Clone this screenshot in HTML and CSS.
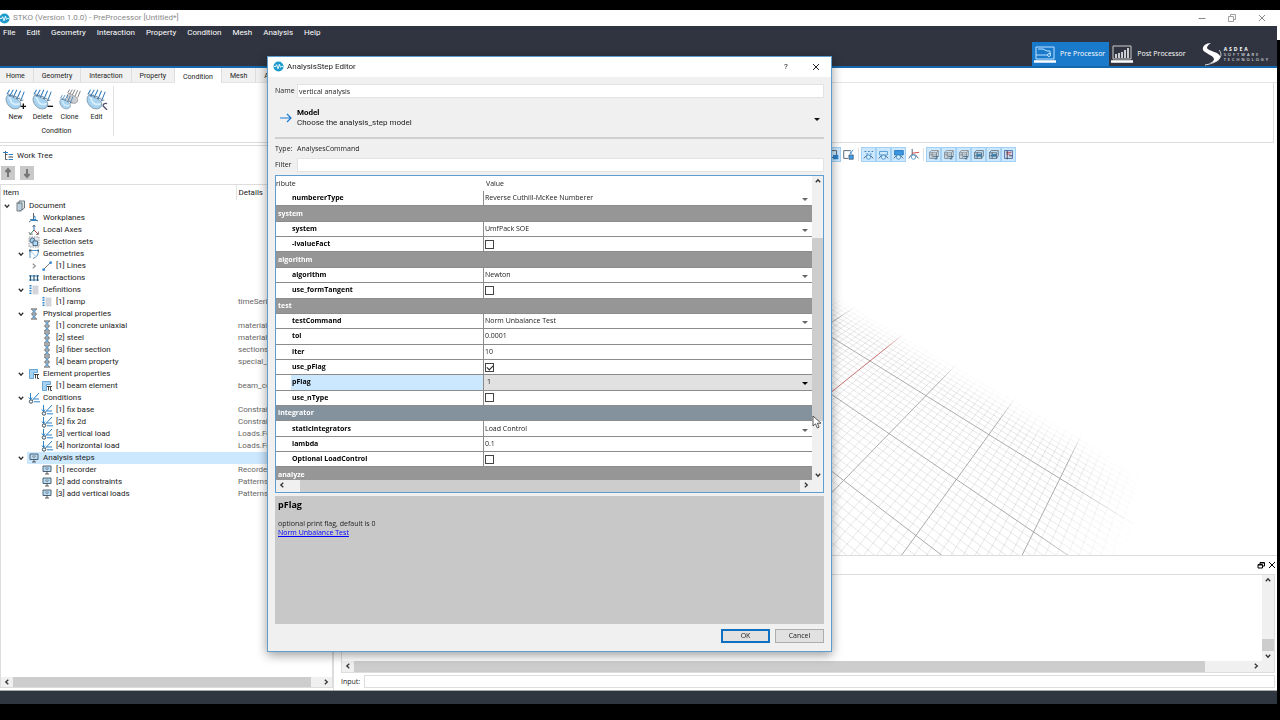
FILE: index.html
```html
<!DOCTYPE html>
<html lang="en">
  <head>
    <meta charset="UTF-8" />
    <meta name="viewport" content="width=device-width, initial-scale=1.0" />
    <title>STKO (Version 1.0.0) - PreProcessor [Untitled*]</title>
    <link rel="stylesheet" href="styles.css">
  </head>
  <body>
    <!-- Icon sprite -->
    <svg class="sprite" aria-hidden="true">
      <symbol id="i-app" viewBox="0 0 12 12"><circle cx="6" cy="6" r="5.5" fill="#1d9ccd"/><path d="M1 6h2l1-2 1.500 4.500 1.500-5 1.200 3.500 1-1h1.800" fill="none" stroke="#fff"/></symbol>
      <symbol id="i-min" viewBox="0 0 10 10"><path d="M1.500 5.500h7" stroke="#888" fill="none"/></symbol>
      <symbol id="i-max" viewBox="0 0 10 10"><path d="M1.500 3.500h5v5h-5zM3.500 3V1.500h5v5H7" stroke="#888" stroke-width=".8" fill="none"/></symbol>
      <symbol id="i-restore" viewBox="0 0 10 10"><path d="M2 4.500h4.500v3.500H2zM4 4V2.500h4.500v3.500H7M2 5h4M4 3h4" stroke="#000" fill="none"/></symbol>
      <symbol id="i-close" viewBox="0 0 10 10"><path d="M2 2l6 6M8 2l-6 6" stroke="currentColor" fill="none"/></symbol>
      <symbol id="i-left" viewBox="0 0 10 10"><path d="M6.300 2.800L3.800 5l2.500 2.200" stroke="#333" stroke-width="1.300" fill="none"/></symbol>
      <symbol id="i-right" viewBox="0 0 10 10"><path d="M3.800 2.800L6.300 5 3.800 7.200" stroke="#333" stroke-width="1.300" fill="none"/></symbol>
      <symbol id="i-up" viewBox="0 0 10 10"><path d="M2.800 6.300L5 3.800l2.200 2.500" stroke="#333" stroke-width="1.300" fill="none"/></symbol>
      <symbol id="i-down" viewBox="0 0 10 10"><path d="M2.800 3.800L5 6.300l2.200-2.500" stroke="#333" stroke-width="1.300" fill="none"/></symbol>
      <symbol id="i-load" viewBox="0 0 22 24"><path d="M2 9c2-3 5 0 7 1 4 2 9 4 8 9-1 4-7 5-11 2S0 13 2 9z" fill="#a9d4f1" stroke="#7e93a3"/><path d="M4 10c3 1 1 5 5 7s6 0 7 0" stroke="#d8eefb" stroke-width="2" fill="none"/><path d="M9 2L5 9M13 2L9 10M17 3l-4 9M21 4l-4 10M5 2L2 7" stroke="#2e78b8" fill="none" stroke-width="1.100"/><path d="M4 6l1 3 3-1M8 7l1 3 3-1M12 9l1 3 3-1M16 11l1 3 3-1" stroke="#4a6f8f" fill="none" stroke-width=".8"/></symbol>
      <symbol id="i-loadgrey" viewBox="0 0 22 24"><path d="M2 9c2-3 5 0 7 1 4 2 9 4 8 9-1 4-7 5-11 2S0 13 2 9z" fill="#c9ccd0" stroke="#8c8c8c"/><path d="M9 2L5 9M13 2L9 10M17 3l-4 9M21 4l-4 10M5 2L2 7" stroke="#555" fill="none" stroke-width="1.100"/></symbol>
      <symbol id="i-tree" viewBox="0 0 12 10"><path d="M2.500 0v8.500h2M2.500 3.500h2" fill="none" stroke="#333" stroke-width=".8"/><path d="M0 1.500h5M5.500 3.500H10M5.500 8.500H10" stroke="#2e84c6"/><path d="M5.500 6H10" stroke="#444"/></symbol>
      <symbol id="t-doc" viewBox="0 0 12 12"><path d="M5 1h5.500v7L8 10H5zM3 2.500v8.500h4.500M3 3h5v7" fill="#dbe4ea" stroke="#4d5a63" stroke-width=".8"/><path d="M4 4h3v6H4z" fill="#b9cfdf"/></symbol>
      <symbol id="t-plane" viewBox="0 0 12 12"><path d="M5.500 1v6L1 10M5.500 7L10 9" stroke="#444" stroke-width=".8" fill="none"/><path d="M1.500 7h6l2.500 2H4zM5.500 3l2 1.500V8" fill="#2e84c6"/></symbol>
      <symbol id="t-axes" viewBox="0 0 12 12"><path d="M6 1v5" stroke="#2675b9"/><path d="M6 6l-4 4.500" stroke="#33855d"/><path d="M6 6l4 4" stroke="#b43b3b"/><path d="M4.500 3L6 1l1.500 2M1 8l1 2.500 3-.5M10.500 7.500v3H8" fill="none" stroke="#555" stroke-width=".7"/></symbol>
      <symbol id="t-set" viewBox="0 0 12 12"><path d="M1 1h10v10H1z" fill="#e5ebf0" stroke="#777" stroke-dasharray="1.500 1" stroke-width=".7"/><circle cx="4.500" cy="4.500" r="2.500" fill="#a7ccea" stroke="#30536f" stroke-width=".8"/><path d="M5 5h4.500v4.500H5z" fill="#b6daf5" stroke="#30536f" stroke-width=".8"/></symbol>
      <symbol id="t-geom" viewBox="0 0 12 12"><path d="M2 1.500V10M2 2.500h8.500c0 4-2 7-5.500 8" fill="none" stroke="#3b88c2" stroke-width=".9"/><path d="M1 1.500h2.500v2H1zM9.500 1.500h1.500v2H9.500z" fill="#4a6578"/><path d="M3.500 4l4 4" stroke="#9bc8e8"/></symbol>
      <symbol id="t-line" viewBox="0 0 12 12"><path d="M2.500 9.500l7-7" stroke="#555" stroke-width=".8"/><path d="M1.500 8.500h2.300v2.300H1.500zM8.500 1.500h2.300v2.300H8.500z" fill="#1c7cd1"/></symbol>
      <symbol id="t-inter" viewBox="0 0 12 12"><path d="M1 4h10M1 8h10" stroke="#2e84c6" stroke-width="1.200"/><path d="M2.500 3v6M6 3v6M9.500 3v6" stroke="#32556f" stroke-width="1.200"/></symbol>
      <symbol id="t-def" viewBox="0 0 12 12"><path d="M4.500 1.500h6v9h-6z" fill="#d2d6da"/><path d="M2.500 1v10" stroke="#2e84c6" stroke-width="2" stroke-dasharray="1.500 1"/></symbol>
      <symbol id="t-phys" viewBox="0 0 12 12"><path d="M3 1h6M3 11h6M4 1.500l4 4M8 1.500l-4 4M4 6.500l4 4M8 6.500l-4 4M3.500 6h5" fill="none" stroke="#33404a" stroke-width=".9"/><circle cx="6" cy="3.500" r="1.200" fill="#5ba4db"/><circle cx="6" cy="8.500" r="1.200" fill="#5ba4db"/></symbol>
      <symbol id="t-elem" viewBox="0 0 12 12"><path d="M1.500 1.500h8v3h-4v6h-4z" fill="#a8d4f4" stroke="#4b96ce" stroke-width=".8"/><path d="M6 6.500h5M7.500 6.500v4M9.500 6.500v4h1.500" fill="none" stroke="#333" stroke-width=".9"/></symbol>
      <symbol id="t-cond" viewBox="0 0 12 12"><path d="M2.500 1v6M.8 5.500l1.700 2 1.700-2M11 1L4 8.500M5.500 7h5.500M6 9.800h6" fill="none" stroke="#2e84c6"/><circle cx="3" cy="9.500" r="1.700" fill="none" stroke="#3b4f5d"/></symbol>
      <symbol id="t-step" viewBox="0 0 12 12"><path d="M2 2h8v5.500H2z" fill="#b8dcf5" stroke="#3f5564" stroke-width=".9"/><path d="M4 10h4M6 7.500V10" stroke="#333" stroke-width=".8"/><path d="M4.500 4h3L6 6z" fill="#fff" stroke="#456" stroke-width=".6"/></symbol>
      <symbol id="v-select" viewBox="0 0 15 15"><path d="M3 3h8v8H3z" fill="none" stroke="#456"/><path d="M7 8h6v5H7z" fill="#2b80c8"/></symbol>
      <symbol id="v-selbox" viewBox="0 0 15 15"><path d="M10 3H2v9h5" fill="none" stroke="#456"/><path d="M8 8h5v5H8z" fill="#4a9bdb" stroke="#246" stroke-width=".7"/><path d="M9 7l4-5M9.500 4l1.500 2.500" stroke="#2b80c8" fill="none"/></symbol>
      <symbol id="v-points" viewBox="0 0 15 15"><path d="M3 4h10M5 7h6" stroke="#2b6ca8" stroke-dasharray="2 2"/><path d="M2 12l3-3h5l3 3" stroke="#456" fill="none"/><circle cx="7.500" cy="10.500" r="2.500" fill="#d3eafb" stroke="#4793cf"/></symbol>
      <symbol id="v-wire" viewBox="0 0 15 15"><path d="M3 4h9v4H3z" fill="#d3eafb" stroke="#4793cf"/><path d="M2 12l3-3h5l3 3" stroke="#456" fill="none"/><circle cx="7.500" cy="10.500" r="2.500" fill="#d3eafb" stroke="#4793cf"/></symbol>
      <symbol id="v-solid" viewBox="0 0 15 15"><path d="M3 3h10v5H3z" fill="#3b96e3" stroke="#2371b3"/><path d="M2 12l3-3h5l3 3" stroke="#456" fill="none"/><circle cx="7.500" cy="10.500" r="2.500" fill="#d3eafb" stroke="#4793cf"/></symbol>
      <symbol id="v-axes" viewBox="0 0 15 15"><path d="M6 1v7M2 12l3-4h5l3 4" stroke="#456" fill="none"/><path d="M6 6l8-1" stroke="#c33"/><circle cx="7.500" cy="10.500" r="2.500" fill="#fff" stroke="#4793cf"/></symbol>
      <symbol id="v-cube" viewBox="0 0 15 15"><path d="M3 5l2-2h8v6l-2 3H3zM3 5.500h8V12M11 5.500l2-2M3 8h8M6 5v7" fill="#dce6ee" stroke="#65717a" stroke-width=".8"/><path d="M7 10h6M9 12.500h3" stroke="#2b5c80"/></symbol>
      <symbol id="v-cubeblue" viewBox="0 0 15 15"><path d="M3 5l2-2h8v6l-2 3H3zM3 5.500h8V12M3 9h8M6 5v7" fill="#cbe4f7" stroke="#3b4c59" stroke-width=".8"/><path d="M5 7h6v3H5z" fill="#3d7eab"/></symbol>
      <symbol id="v-flag" viewBox="0 0 15 15"><path d="M3 3h9v9H3z" fill="#dbe7f5" stroke="#3b5c9b"/><path d="M5 5h6M5 7h5" stroke="#b45"/><path d="M6 3v10M8 9h4" stroke="#334"/></symbol>
    </svg>

    <div class="app">
      <header class="titlebar">
        <svg class="app-icon"><use href="#i-app"/></svg>
        <span class="titlebar-text">STKO (Version 1.0.0) - PreProcessor [Untitled*]</span>
        <button class="win-btn" aria-label="Minimize"><svg class="glyph"><use href="#i-min"/></svg></button>
        <button class="win-btn" aria-label="Restore"><svg class="glyph"><use href="#i-max"/></svg></button>
        <button class="win-btn" aria-label="Close"><svg class="glyph"><use href="#i-close"/></svg></button>
      </header>

      <div class="topband">
        <nav class="menubar">
          <a href="#">File</a><a href="#">Edit</a><a href="#">Geometry</a><a href="#">Interaction</a><a href="#">Property</a><a href="#">Condition</a><a href="#">Mesh</a><a href="#">Analysis</a><a href="#">Help</a>
        </nav>
        <div class="modes">
          <button class="mode active">
            <svg viewBox="0 0 22 20"><path d="M2 3h18v12H2zM2 11h13l2-2M4 5h5l4 2h3v4" fill="none" stroke="#bfe3ff"/><path d="M0 17.500h22" stroke="#fff" stroke-width="2.500"/><circle cx="15" cy="11" r="1.500" fill="#1979ca" stroke="#bfe3ff"/></svg>
            Pre Processor
          </button>
          <button class="mode">
            <svg viewBox="0 0 22 20"><path d="M2 2h18v13H2z" fill="none" stroke="#ccc"/><path d="M5 14v-4M8 14V9M11 14V8M14 14V6M17 14V4" stroke="#fff" stroke-width="1.500"/><path d="M0 17.500h22" stroke="#fff" stroke-width="2.500"/></svg>
            Post Processor
          </button>
          <div class="brand">
            <svg viewBox="0 0 20 24"><path d="M9 1C4 1 0 4 1 8c1 3 10 5 11 9 0 2-2 3-4 4 6 0 11-3 10-7S6 9 5 6c0-2 2-4 4-5z" fill="#fff"/><path d="M17 8c4 4 3 12-14 15" fill="none" stroke="#ddd"/></svg>
            <div class="brand-text"><b>ASDEA</b><span>SOFTWARE</span><span>TECHNOLOGY</span></div>
          </div>
        </div>
      </div>

      <div class="tabs">
        <button>Home</button><button>Geometry</button><button>Interaction</button><button>Property</button><button class="current">Condition</button><button>Mesh</button><button>Analysis</button>
      </div>
      <section class="ribbon">
        <div class="ribbon-group">
          <div class="ribbon-tools">
            <button><svg viewBox="0 0 24 24"><use href="#i-load" width="22" height="24"/><path d="M17 20h6M20 17v6" stroke="#111" stroke-width="1.500"/></svg>New</button>
            <button><svg viewBox="0 0 24 24"><use href="#i-load" width="22" height="24"/><path d="M17 20h6" stroke="#111" stroke-width="1.500"/></svg>Delete</button>
            <button><svg viewBox="0 0 24 24"><use href="#i-loadgrey" x="8" width="16" height="18"/><use href="#i-load" x="0" y="6" width="16" height="18"/></svg>Clone</button>
            <button><svg viewBox="0 0 24 24"><use href="#i-load" width="22" height="24"/><path d="M23 17c-3-1-5 1-4 3l4 4" stroke="#557" fill="none" stroke-width="1.500"/></svg>Edit</button>
          </div>
          <div class="ribbon-label">Condition</div>
        </div>
      </section>

      <main class="workspace">
        <aside class="dock">
          <h2><svg><use href="#i-tree"/></svg>Work Tree</h2>
          <div class="dock-tools">
            <button aria-label="Move up"><svg viewBox="0 0 14 14"><path d="M7 11V4M4.500 6L7 3l2.500 3" fill="none" stroke="#777" stroke-width="2"/></svg></button>
            <button aria-label="Move down"><svg viewBox="0 0 14 14"><path d="M7 3v7M4.500 8L7 11l2.500-3" fill="none" stroke="#777" stroke-width="2"/></svg></button>
          </div>
          <div class="tree-panel">
            <table class="tree">
              <thead><tr><th>Item</th><th>Details</th></tr></thead>
              <tbody>
                <tr><td><div class="node l0"><svg><use href="#i-down"/></svg><svg><use href="#t-doc"/></svg>Document</div></td><td></td></tr>
                <tr><td><div class="node l1"><i></i><svg><use href="#t-plane"/></svg>Workplanes</div></td><td></td></tr>
                <tr><td><div class="node l1"><i></i><svg><use href="#t-axes"/></svg>Local Axes</div></td><td></td></tr>
                <tr><td><div class="node l1"><i></i><svg><use href="#t-set"/></svg>Selection sets</div></td><td></td></tr>
                <tr><td><div class="node l1"><svg><use href="#i-down"/></svg><svg><use href="#t-geom"/></svg>Geometries</div></td><td></td></tr>
                <tr><td><div class="node l2"><svg class="dim"><use href="#i-right"/></svg><svg><use href="#t-line"/></svg>[1] Lines</div></td><td></td></tr>
                <tr><td><div class="node l1"><i></i><svg><use href="#t-inter"/></svg>Interactions</div></td><td></td></tr>
                <tr><td><div class="node l1"><svg><use href="#i-down"/></svg><svg><use href="#t-def"/></svg>Definitions</div></td><td></td></tr>
                <tr><td><div class="node l2"><i></i><svg><use href="#t-def"/></svg>[1] ramp</div></td><td>timeSeries</td></tr>
                <tr><td><div class="node l1"><svg><use href="#i-down"/></svg><svg><use href="#t-phys"/></svg>Physical properties</div></td><td></td></tr>
                <tr><td><div class="node l2"><i></i><svg><use href="#t-phys"/></svg>[1] concrete uniaxial</div></td><td>materials</td></tr>
                <tr><td><div class="node l2"><i></i><svg><use href="#t-phys"/></svg>[2] steel</div></td><td>materials</td></tr>
                <tr><td><div class="node l2"><i></i><svg><use href="#t-phys"/></svg>[3] fiber section</div></td><td>sections</td></tr>
                <tr><td><div class="node l2"><i></i><svg><use href="#t-phys"/></svg>[4] beam property</div></td><td>special_purpose</td></tr>
                <tr><td><div class="node l1"><svg><use href="#i-down"/></svg><svg><use href="#t-elem"/></svg>Element properties</div></td><td></td></tr>
                <tr><td><div class="node l2"><i></i><svg><use href="#t-elem"/></svg>[1] beam element</div></td><td>beam_column</td></tr>
                <tr><td><div class="node l1"><svg><use href="#i-down"/></svg><svg><use href="#t-cond"/></svg>Conditions</div></td><td></td></tr>
                <tr><td><div class="node l2"><i></i><svg><use href="#t-cond"/></svg>[1] fix base</div></td><td>Constraints</td></tr>
                <tr><td><div class="node l2"><i></i><svg><use href="#t-cond"/></svg>[2] fix 2d</div></td><td>Constraints</td></tr>
                <tr><td><div class="node l2"><i></i><svg><use href="#t-cond"/></svg>[3] vertical load</div></td><td>Loads.Force</td></tr>
                <tr><td><div class="node l2"><i></i><svg><use href="#t-cond"/></svg>[4] horizontal load</div></td><td>Loads.Force</td></tr>
                <tr class="selected"><td><div class="node l1"><svg><use href="#i-down"/></svg><svg><use href="#t-step"/></svg>Analysis steps</div></td><td></td></tr>
                <tr><td><div class="node l2"><i></i><svg><use href="#t-step"/></svg>[1] recorder</div></td><td>Recorders</td></tr>
                <tr><td><div class="node l2"><i></i><svg><use href="#t-step"/></svg>[2] add constraints</div></td><td>Patterns</td></tr>
                <tr><td><div class="node l2"><i></i><svg><use href="#t-step"/></svg>[3] add vertical loads</div></td><td>Patterns</td></tr>
              </tbody>
            </table>
            <div class="hbar tree-bar"><svg><use href="#i-left"/></svg><div class="track"><div class="thumb"></div></div><svg><use href="#i-right"/></svg></div>
          </div>
        </aside>

        <section class="view">
          <div class="viewbar">
            <button class="on" aria-label="Select"><svg><use href="#v-select"/></svg></button>
            <button aria-label="Select box"><svg><use href="#v-selbox"/></svg></button>
            <span class="sep"></span>
            <button class="on" aria-label="Points"><svg><use href="#v-points"/></svg></button>
            <button class="on" aria-label="Wireframe"><svg><use href="#v-wire"/></svg></button>
            <button class="on" aria-label="Solid"><svg><use href="#v-solid"/></svg></button>
            <button aria-label="Axes"><svg><use href="#v-axes"/></svg></button>
            <span class="sep"></span>
            <button class="on" aria-label="Top"><svg><use href="#v-cube"/></svg></button>
            <button class="on" aria-label="Bottom"><svg><use href="#v-cube"/></svg></button>
            <button class="on" aria-label="Front"><svg><use href="#v-cube"/></svg></button>
            <button class="on" aria-label="Back"><svg><use href="#v-cubeblue"/></svg></button>
            <button class="on" aria-label="Left"><svg><use href="#v-cubeblue"/></svg></button>
            <button class="on" aria-label="Labels"><svg><use href="#v-flag"/></svg></button>
          </div>
          <div class="scene"><canvas id="scene"></canvas></div>
          <div class="console-head">
            <button class="win-btn small" aria-label="Float"><svg class="glyph"><use href="#i-restore"/></svg></button>
            <button class="win-btn small" aria-label="Close console"><svg class="glyph"><use href="#i-close"/></svg></button>
          </div>
          <div class="console">
            <div class="console-text"></div>
            <div class="vbar console-vbar"><svg><use href="#i-up"/></svg><div class="track"><div class="thumb"></div></div><svg><use href="#i-down"/></svg></div>
            <div class="hbar console-hbar"><svg><use href="#i-left"/></svg><div class="track"><div class="thumb"></div></div><svg><use href="#i-right"/></svg></div>
          </div>
          <div class="console-input"><label for="cmd">Input:</label><input id="cmd" type="text" /></div>
        </section>
      </main>

      <footer class="statusbar"></footer>
    </div>

    <div class="dialog" role="dialog" aria-labelledby="dlg-title">
      <div class="dialog-title">
        <svg class="app-icon"><use href="#i-app"/></svg>
        <span id="dlg-title">AnalysisStep Editor</span>
        <button class="win-btn" aria-label="Help">?</button>
        <button class="win-btn" aria-label="Close dialog"><svg class="glyph"><use href="#i-close"/></svg></button>
      </div>
      <div class="dialog-body">
        <div class="field"><label for="name">Name</label><input id="name" type="text" value="vertical analysis" /></div>
        <button class="model">
          <svg viewBox="0 0 14 12"><path d="M1 6h11M8 2l4 4-4 4" fill="none" stroke="#1c7cd1" stroke-width="1.200"/></svg>
          <span><b>Model</b>Choose the analysis_step model</span>
        </button>
        <div class="field type"><span>Type:</span><span>AnalysesCommand</span></div>
        <div class="field"><label for="filter">Filter</label><input id="filter" type="text" /></div>

        <div class="props">
          <div class="props-view">
            <table>
              <thead><tr><th>ribute</th><th>Value</th></tr></thead>
              <tbody>
                <tr><th><label for="p1">numbererType</label></th><td class="combo"><select id="p1"><option>Reverse Cuthill-McKee Numberer</option></select></td></tr>
                <tr class="group"><th colspan="2">system</th></tr>
                <tr><th><label for="p2">system</label></th><td class="combo"><select id="p2"><option>UmfPack SOE</option></select></td></tr>
                <tr><th><label for="p3">-lvalueFact</label></th><td><input id="p3" type="checkbox" /></td></tr>
                <tr class="group"><th colspan="2">algorithm</th></tr>
                <tr><th><label for="p4">algorithm</label></th><td class="combo"><select id="p4"><option>Newton</option></select></td></tr>
                <tr><th><label for="p5">use_formTangent</label></th><td><input id="p5" type="checkbox" /></td></tr>
                <tr class="group"><th colspan="2">test</th></tr>
                <tr><th><label for="p6">testCommand</label></th><td class="combo"><select id="p6"><option>Norm Unbalance Test</option></select></td></tr>
                <tr><th><label for="p7">tol</label></th><td><input id="p7" type="text" value="0.0001" /></td></tr>
                <tr><th><label for="p8">iter</label></th><td><input id="p8" type="text" value="10" /></td></tr>
                <tr><th><label for="p9">use_pFlag</label></th><td><input id="p9" type="checkbox" checked /></td></tr>
                <tr class="editing"><th><label for="p10">pFlag</label></th><td class="combo"><select id="p10"><option>1</option></select></td></tr>
                <tr><th><label for="p11">use_nType</label></th><td><input id="p11" type="checkbox" /></td></tr>
                <tr class="group hover"><th colspan="2">integrator</th></tr>
                <tr><th><label for="p12">staticIntegrators</label></th><td class="combo"><select id="p12"><option>Load Control</option></select></td></tr>
                <tr><th><label for="p13">lambda</label></th><td><input id="p13" type="text" value="0.1" /></td></tr>
                <tr><th><label for="p14">Optional LoadControl</label></th><td><input id="p14" type="checkbox" /></td></tr>
                <tr class="group"><th colspan="2">analyze</th></tr>
              </tbody>
            </table>
          </div>
          <div class="vbar props-vbar"><svg><use href="#i-up"/></svg><div class="track"><div class="thumb"></div></div><svg><use href="#i-down"/></svg></div>
          <div class="hbar props-hbar"><svg><use href="#i-left"/></svg><div class="track"><div class="thumb"></div></div><svg><use href="#i-right"/></svg></div>
        </div>

        <div class="help">
          <h3>pFlag</h3>
          <p>optional print flag, default is 0</p>
          <a href="#">Norm Unbalance Test</a>
        </div>
        <div class="actions">
          <button class="default">OK</button>
          <button>Cancel</button>
        </div>
      </div>
    </div>

    <svg class="cursor" viewBox="0 0 10 14"><path d="M1 1v10l2.500-2.200L5.300 13l1.800-.8L5.400 8.200H9z" fill="#fff" stroke="#333" stroke-width=".8"/></svg>

    <script src="scene.js"></script>
  </body>
</html>
```
FILE: styles.css
```css
* {
  box-sizing: border-box;
}

body {
  margin: 0;
  height: 100vh;
  padding: 10px 3px 16px 0;
  background: linear-gradient(#fff, #fff) right 10px / 3px 30px no-repeat #000;
  font-family: Roboto, "Noto Sans", sans-serif;
  font-size: 8px;
  line-height: 12px;
  color: #222;
  overflow: hidden;
}

button,
input,
select {
  font: inherit;
  color: inherit;
  margin: 0;
  padding: 0;
  border: 0;
  background: none;
}

svg {
  display: block;
  flex: none;
}

.sprite {
  position: absolute;
  width: 0;
  height: 0;
}

.app {
  display: flex;
  flex-direction: column;
  height: 100%;
  background: #fff;
}

/* title bar */
.titlebar,
.dialog-title {
  display: flex;
  align-items: center;
  background: #fff;
}

.titlebar {
  height: 16px;
  color: #8a8a8a;
}

.app-icon {
  width: 11px;
  height: 11px;
}

.titlebar .app-icon {
  margin-left: -1px;
}

.titlebar-text {
  flex: 1;
  padding-left: 3px;
}

.win-btn {
  width: 30px;
  height: 16px;
  display: flex;
  align-items: center;
  justify-content: center;
}

.glyph {
  width: 10px;
  height: 10px;
}

/* dark band */
.topband {
  height: 42px;
  flex: none;
  display: flex;
  justify-content: space-between;
  background: #303440;
  border-bottom: 2px solid #1668ac;
  color: #fff;
}

.menubar {
  display: flex;
  gap: 11px;
  padding: 1px 3px;
}

.menubar a {
  color: #fff;
  text-decoration: none;
}

.modes {
  display: flex;
  align-items: flex-end;
  padding-right: 7px;
  font-family: "Open Sans", "Noto Sans", sans-serif;
}

.mode {
  display: flex;
  align-items: center;
  gap: 4px;
  height: 24px;
  padding: 0 4px 0 2px;
  font-size: 7px;
}

.mode.active {
  background: #1979ca;
}

.mode svg {
  width: 22px;
  height: 20px;
}

.brand {
  display: flex;
  align-items: center;
  gap: 2px;
  height: 24px;
  padding-left: 12px;
}

.brand svg {
  width: 20px;
  height: 24px;
}

.brand-text {
  display: flex;
  flex-direction: column;
  font-size: 4px;
  line-height: 5px;
  letter-spacing: 2px;
}

.brand-text b {
  font-size: 5px;
}

/* ribbon */
.tabs {
  flex: none;
  display: flex;
  height: 15px;
  border-bottom: 1px solid #e4e4e4;
  font-size: 7px;
}

.tabs button {
  padding: 2px 8px 0;
  background: #f1f1f1;
  border-right: 1px solid #dedede;
}

.tabs button:first-child {
  padding-left: 6px;
}

.tabs .current {
  background: #fff;
  height: 15px;
}

.ribbon {
  flex: none;
  height: 60px;
  border-right: 1px solid #ddd;
  border-bottom: 1px solid #ddd;
  margin-right: 3px;
  padding-top: 3px;
  font-size: 7px;
}

.ribbon-group {
  width: 114px;
  height: 50px;
  border-right: 1px solid #e2e2e2;
  text-align: center;
}

.ribbon-tools {
  display: flex;
  height: 39px;
  padding: 2px 0 0 2px;
}

.ribbon-tools button {
  width: 27px;
  display: flex;
  flex-direction: column;
  align-items: center;
}

.ribbon-tools svg {
  width: 22px;
  height: 22px;
  margin-bottom: 1px;
}

/* work tree */
.workspace {
  flex: 1;
  min-height: 0;
  display: grid;
  grid-template-columns: 334px 1fr;
  gap: 5px;
  padding-top: 2px;
}

.dock {
  display: flex;
  flex-direction: column;
  border-top: 1px solid #ddd;
  border-right: 1px solid #ddd;
}

.dock h2 {
  display: flex;
  align-items: center;
  gap: 2px;
  margin: 0;
  padding: 4px 3px 3px;
  font-size: 8px;
  font-weight: normal;
}

.dock h2 svg {
  width: 12px;
  height: 10px;
}

.dock-tools {
  display: flex;
  gap: 5px;
  padding: 1px 1px 4px;
}

.dock-tools button {
  background: #c9c9c9;
}

.dock-tools svg {
  width: 14px;
  height: 14px;
}

.tree-panel {
  flex: 1;
  display: flex;
  flex-direction: column;
  justify-content: space-between;
  margin-bottom: 2px;
  border: 1px solid #ddd;
}

.tree {
  border-collapse: collapse;
  table-layout: fixed;
  width: 100%;
}

.tree th {
  height: 15px;
  padding: 0 2px;
  text-align: left;
  font-weight: normal;
}

.tree th:first-child {
  width: 235px;
  border-right: 1px solid #e4e4e4;
}

.tree td {
  height: 12px;
  padding: 0 2px;
  color: #666;
}

.tree td:first-child {
  padding: 0;
}

.node {
  display: flex;
  align-items: center;
  height: 12px;
  color: #222;
}

.node svg,
.node i {
  width: 12px;
  height: 12px;
  margin-right: 3px;
}

.node svg:first-child,
.node i {
  width: 12px;
  height: 10px;
  margin-right: 1px;
}

.node svg.dim {
  opacity: 0.5;
}

.l0 {
  padding-left: 0;
}

.l1 {
  padding-left: 14px;
}

.l2 {
  padding-left: 27px;
}

.selected td {
  background: #cce8ff;
}

.selected td:first-child {
  background: linear-gradient(90deg, #fff 26px, #cce8ff 26px);
}

/* scrollbars */
.hbar,
.vbar {
  display: flex;
  background: #f0f0f0;
}

.vbar {
  flex-direction: column;
}

.hbar svg,
.vbar svg {
  width: 12px;
  height: 10px;
}

.track {
  flex: 1;
  display: flex;
}

.thumb {
  background: #cdcdcd;
}

.hbar .thumb {
  width: 97%;
}

.vbar .track {
  flex-direction: column;
}

/* 3d view */
.view {
  display: flex;
  flex-direction: column;
  min-width: 0;
}

.viewbar {
  display: flex;
  height: 18px;
  padding: 2px 0 1px 487px;
}

.viewbar button {
  width: 15px;
  border: 1px solid transparent;
}

.viewbar button.on {
  background: #cce8ff;
  border-color: #a3d0f3;
}

.viewbar svg {
  width: 13px;
  height: 13px;
}

.sep {
  width: 1px;
  margin: 1px 2px;
  background: #e0e0e0;
}

.scene {
  flex: 1;
  position: relative;
  min-height: 0;
  border-bottom: 1px solid #ddd;
}

.scene canvas {
  display: block;
  position: absolute;
  width: 100%;
  height: 100%;
}

.console-head {
  display: flex;
  justify-content: flex-end;
  align-items: center;
  height: 18px;
  color: #000;
}

.win-btn.small {
  width: 11px;
}

.console {
  display: grid;
  grid-template-columns: 1fr 12px;
  grid-template-rows: 86px 11px;
  margin: 0 2px;
  border: 1px solid #ddd;
  background: #f0f0f0;
}

.console-text {
  background: #fff;
}

.console-vbar .track {
  justify-content: flex-end;
}

.console-vbar .thumb {
  height: 12px;
}

.console-hbar .thumb {
  width: 95%;
}

.console-input {
  display: flex;
  align-items: center;
  gap: 4px;
  margin: 2px;
  font-family: "Open Sans", "Noto Sans", sans-serif;
  font-size: 7px;
}

.console-input input {
  flex: 1;
  height: 13px;
  border: 1px solid #ddd;
}

.statusbar {
  height: 14px;
  flex: none;
  background: #303640;
  border-top: 1px solid #aaa;
}

/* step editor */
.dialog {
  position: absolute;
  left: 267px;
  top: 56px;
  width: 565px;
  background: #f0f0f0;
  border: 1px solid #5e9fd0;
  box-shadow: 0 3px 10px rgba(0, 0, 0, 0.4);
}

.dialog-title {
  height: 20px;
  padding: 0 0 1px 5px;
}

.dialog-title span {
  flex: 1;
  padding-left: 3px;
}

.dialog-body {
  padding: 7px 7px 8px;
  font-family: "Open Sans", "Noto Sans", sans-serif;
  font-size: 7px;
}

.field {
  display: grid;
  grid-template-columns: 22px 1fr;
  align-items: center;
}

.field input {
  height: 14px;
  padding: 0 1px;
  background: #fff;
  border: 1px solid #e3e3e3;
}

.field.type {
  height: 19px;
}

.model {
  position: relative;
  display: flex;
  align-items: center;
  gap: 4px;
  width: 100%;
  height: 41px;
  padding: 0 0 0 4px;
  border-bottom: 2px solid #d0d0d0;
  text-align: left;
  font-family: Roboto, "Noto Sans", sans-serif;
  font-size: 8px;
  line-height: 10px;
}

.model svg {
  width: 14px;
  height: 12px;
}

.model b {
  display: block;
  color: #000;
}

.model::after,
.combo::after {
  content: "";
  position: absolute;
  right: 4px;
  top: 50%;
  border: 3px solid transparent;
  border-top-color: #111;
  border-bottom: 0;
}

.props {
  display: grid;
  grid-template-columns: 1fr 11px;
  grid-template-rows: 304px 12px;
  margin-top: 3px;
  border: 1px solid #5e9fd0;
  background: #f0f0f0;
}

.props-view {
  overflow: hidden;
  background: #fff;
}

.props table {
  width: 100%;
  height: 307px;
  table-layout: fixed;
  border-collapse: separate;
  border-spacing: 0;
  line-height: 12px;
}

.props th,
.props td {
  padding: 0;
  text-align: left;
}

.props thead th {
  height: 15px;
  font-weight: normal;
}

.props thead th:first-child {
  width: 207px;
}

.props thead th + th {
  padding-left: 3px;
}

.props tbody th,
.props tbody td {
  border-bottom: 1px solid #8c8c8c;
}

.props tbody th {
  padding-left: 16px;
  color: #000;
}

.props tbody td {
  position: relative;
  padding-left: 1px;
  border-left: 1px solid #8c8c8c;
}

.props tbody .group th {
  padding-left: 2px;
  background: #969696;
  color: #fff;
}

.props tbody .group.hover th {
  background: #84929e;
}

.props select,
.props input[type="text"] {
  appearance: none;
  display: block;
  width: 100%;
  height: 12px;
}

.props input[type="checkbox"] {
  appearance: none;
  display: block;
  width: 9px;
  height: 9px;
  border: 1px solid #444;
  background: #fff;
}

.props input:checked::after {
  content: "";
  display: block;
  width: 5px;
  height: 3px;
  margin: 1px;
  border: solid #222;
  border-width: 0 0 1px 1px;
  transform: rotate(-45deg);
}

.combo::after {
  border-width: 3px 3px 0;
  border-top-color: #666;
}

.props .editing th {
  background: linear-gradient(90deg, #fff 15px, #cce8ff 15px);
}

.props .editing td {
  padding-left: 3px;
  background: #e1e1e1;
}

.props .editing td::after {
  border-top-color: #000;
}

.props-vbar .track {
  padding-top: 52px;
}

.props-vbar .thumb {
  height: 183px;
}

.props-hbar .track {
  padding-left: 12px;
}

.props-hbar .thumb {
  width: 100%;
}

.help {
  height: 128px;
  margin-top: 3px;
  padding: 3px;
  background: #c8c8c8;
  line-height: 9px;
}

.help h3 {
  margin: 0 0 8px;
  font-size: 9px;
  line-height: 12px;
  color: #000;
}

.help p {
  margin: 0;
}

.help a {
  color: #00f;
}

.actions {
  display: flex;
  justify-content: flex-end;
  gap: 5px;
  margin-top: 5px;
}

.actions button {
  width: 49px;
  height: 14px;
  background: #e1e1e1;
  border: 1px solid #adadad;
  line-height: 10px;
}

.actions .default {
  border: 2px solid #0f6fc0;
}

.cursor {
  position: absolute;
  left: 812px;
  top: 415px;
  width: 10px;
  height: 14px;
}
```
FILE: scene.js
```js
// Ground grid, seen in perspective
const canvas = document.getElementById("scene");
const ctx = canvas.getContext("2d");

// Project a point of the ground plane (u, v) to canvas pixels
function project(u, v) {
  const w = 1 - 0.0547 * u - 0.089 * v;
  return {
    x: (5.33 * u - 114 * v + 870) / w - 339,
    y: (13 * u - 2.7 * v + 361) / w - 163,
  };
}

// The grid fades out towards its edges
function fade(u, v) {
  const a = Math.min(1, Math.max(0, (v + 1) / 0.6));
  const b = Math.min(1, Math.max(0, (3.95 - u) / 0.9));
  return a * b;
}

function drawSegment(u0, v0, u1, v1, color, alpha) {
  const p = project(u0, v0);
  const q = project(u1, v1);
  ctx.globalAlpha = alpha * fade((u0 + u1) / 2, (v0 + v1) / 2);
  ctx.strokeStyle = color;
  ctx.beginPath();
  ctx.moveTo(p.x, p.y);
  ctx.lineTo(q.x, q.y);
  ctx.stroke();
}

function drawGrid() {
  canvas.width = canvas.clientWidth;
  canvas.height = canvas.clientHeight;
  const step = 0.1;
  for (let i = -30; i <= 41; i++) {
    const major = i % 10 === 0;
    for (let j = -11; j < 40; j++) {
      const color = i === 0 ? "#b03030" : "#888";
      drawSegment(i / 10, j * step, i / 10, (j + 1) * step, color, major ? 0.7 : 0.2);
    }
  }
  for (let j = -10; j <= 40; j++) {
    const major = j % 10 === 0 && j >= 0;
    for (let i = -30; i < 41; i++) {
      drawSegment(i * step, j / 10, (i + 1) * step, j / 10, "#888", major ? 0.7 : 0.2);
    }
  }
}

drawGrid();
window.addEventListener("resize", drawGrid);
```
